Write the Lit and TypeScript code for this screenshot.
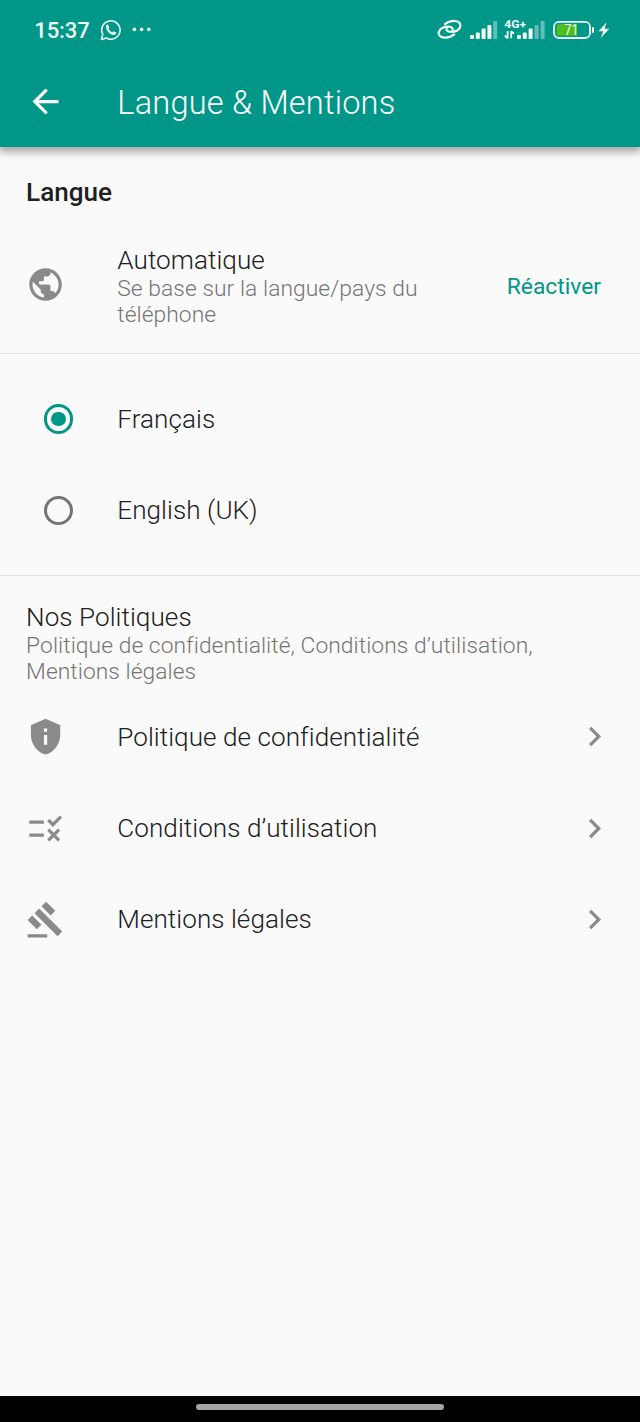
import { LitElement, html, css } from "lit";
import { customElement, property, state } from "lit/decorators.js";
import { classMap } from "lit/directives/class-map.js";

const ICONS: Record<string, string> = {
  back: "M20 11H7.83l5.59-5.59L12 4l-8 8 8 8 1.41-1.41L7.83 13H20v-2z",
  globe:
    "M12 2C6.48 2 2 6.48 2 12s4.48 10 10 10 10-4.48 10-10S17.52 2 12 2zm-1 17.93c-3.95-.49-7-3.85-7-7.93 0-.62.08-1.21.21-1.79L9 15v1c0 1.1.9 2 2 2v1.93zm6.9-2.54c-.26-.81-1-1.39-1.9-1.39h-1v-3c0-.55-.45-1-1-1H8v-2h2c.55 0 1-.45 1-1V7h2c1.1 0 2-.9 2-2v-.41c2.93 1.19 5 4.06 5 7.41 0 2.08-.8 3.97-2.1 5.39z",
  shield:
    "M12 1L3 5v6c0 5.55 3.84 10.74 9 12 5.16-1.26 9-6.45 9-12V5l-9-4zm-1 6h2v2h-2V7zm0 4h2v6h-2v-6z",
  rule:
    "M16.54 11L13 7.46l1.41-1.41 2.12 2.12 4.24-4.24 1.41 1.41L16.54 11zM11 7H2v2h9V7zm10 6.41L19.59 12 17 14.59 14.41 12 13 13.41 15.59 16 13 18.59 14.41 20 17 17.41 19.59 20 21 18.59 18.41 16 21 13.41zM11 15H2v2h9v-2z",
  gavel:
    "M1 21h12v2H1v-2zM5.245 8.07l2.83-2.827 14.14 14.142-2.828 2.828L5.245 8.07zM12.317 1l5.657 5.656-2.83 2.83-5.654-5.66L12.317 1zM3.825 9.485l5.657 5.657-2.828 2.828-5.657-5.657 2.828-2.828z",
  chevron: "M10 6L8.59 7.41 13.17 12l-4.58 4.59L10 18l6-6z",
};

@customElement("md-icon")
class MdIcon extends LitElement {
  @property() name = "";
  static styles = css`
    :host { display: block; width: 39.1px; height: 39.1px; flex: none; }
    svg { display: block; width: 100%; height: 100%; fill: currentColor; }
  `;
  render() {
    return html`<svg viewBox="0 0 24 24"><path d=${ICONS[this.name]} /></svg>`;
  }
}

@customElement("status-bar")
class StatusBar extends LitElement {
  static styles = css`
    :host { display: flex; align-items: center; height: 56px; padding: 0 29px 0 34.3px; color: #f0faf8; }
    .time { font-size: 22px; font-weight: 500; line-height: 26px; margin-top: 5px; width: 65.7px; letter-spacing: -0.1px; }
    svg { display: block; flex: none; margin-top: 3px; }
    .grow { flex: 1; }
    .dots { margin-left: 10px; }
    .net { font: 700 11.5px Roboto, sans-serif; fill: #f0faf8; }
    .pct { font: 400 14px Roboto, sans-serif; fill: #f0faf8; }
  `;
  render() {
    return html`
      <span class="time">15:37</span>
      <svg width="22" height="22" viewBox="0 0 22 22" fill="none" stroke="#f0faf8">
        <path stroke-width="1.6" stroke-linejoin="round" d="M1.4 20.4 2.8 15.4A9.2 9.2 0 1 1 6.3 19Z" />
        <path fill="#f0faf8" stroke="none" d="M6 7.6C6 6.4 7 5.4 7.9 5.6L9.3 8.4 8.5 9.8C9.3 11.5 10.7 12.7 12.3 13.4L13.5 12.2 16.3 13.6C16.4 15 15 16.1 13.7 16.1 9.8 15.7 6.1 11.6 6 7.6Z" />
      </svg>
      <svg class="dots" width="20" height="22" viewBox="0 0 20 22" fill="#f0faf8">
        <circle cx="2.4" cy="10.4" r="1.8" /><circle cx="9.6" cy="10.4" r="1.8" /><circle cx="16.8" cy="10.4" r="1.8" />
      </svg>
      <span class="grow"></span>
      <svg width="174" height="30" viewBox="0 0 174 30" fill="#f0faf8">
        <g fill="none" stroke="#f0faf8" stroke-width="2.2" stroke-linecap="round">
          <path d="M8 9.2C11 6.6 14.5 5.8 18 6 22.5 6.2 24.6 9.6 22.9 12.6 21 15.9 16.5 17 13.5 16.9 10.5 16.8 9.2 15.3 9.6 13.4" />
          <path d="M17.2 19.4C14.2 22 10.7 22.8 7.2 22.6 2.7 22.4.6 19 2.3 16 4.2 12.7 8.7 11.6 11.7 11.7 14.7 11.8 16 13.3 15.6 15.2" />
        </g>
        <g transform="translate(-1 0)">
          <rect x="34" y="20" width="4" height="4" rx="1" /><rect x="39.8" y="17.5" width="4" height="6.5" rx="1" />
          <rect x="45.6" y="13.5" width="4" height="10.5" rx="1" /><rect x="51.4" y="10" width="4" height="14" rx="1" />
          <rect x="57.2" y="6" width="4" height="18" rx="1" opacity=".4" />
          <text class="net" x="68.2" y="13" textLength="21.8" lengthAdjust="spacingAndGlyphs">4G+</text>
          <g fill="none" stroke="#f0faf8" stroke-width="1.8">
            <path d="M71.6 16v7.4M68.8 20.5l2.8 2.8M75.2 23.2V16M78 18.7l-2.8-2.6" />
          </g>
          <rect x="81" y="20" width="4" height="4" rx="1" /><rect x="86.8" y="17.5" width="4" height="6.5" rx="1" />
          <rect x="92.6" y="13.5" width="4" height="10.5" rx="1" />
          <rect x="98.6" y="10" width="4" height="14" rx="1" opacity=".4" /><rect x="104.6" y="6" width="4" height="18" rx="1" opacity=".4" />
          <rect x="118" y="6.8" width="36" height="16.2" rx="5" fill="none" stroke="#f0faf8" stroke-width="1.8" />
          <path fill="#4cbf1d" d="M123 9h18v11.8h-18a2.4 2.4 0 0 1-2.4-2.4v-7a2.4 2.4 0 0 1 2.4-2.4Z" />
          <text class="pct" x="128.6" y="20" textLength="14" lengthAdjust="spacingAndGlyphs">71</text>
          <rect x="156" y="12" width="2" height="6" rx="1" />
          <path d="M170.5 7.2 162.5 16.2H167.2L164.6 23.2 173.4 13.8H168.6Z" />
        </g>
      </svg>
    `;
  }
}

@customElement("list-row")
class ListRow extends LitElement {
  @property() icon = "";
  @property() label = "";
  static styles = css`
    :host { display: flex; align-items: center; height: 91.2px; padding: 0 26.1px; color: #8a8a8a; }
    .label { flex: 1; margin-left: 52.1px; font-size: 26.1px; line-height: 32px; color: #202020; letter-spacing: 0.05px; }
  `;
  render() {
    return html`
      <md-icon name=${this.icon}></md-icon>
      <span class="label">${this.label}</span>
      <md-icon name="chevron"></md-icon>
    `;
  }
}

@customElement("app-root")
class AppRoot extends LitElement {
  @state() private selected = "fr";

  static styles = css`
    :host {
      display: flex; flex-direction: column; height: 1422px; width: 640px; overflow: hidden;
      background: #fafafa; color: #202020; font-family: Roboto, sans-serif; font-weight: 300;
    }
    .header { flex: none; height: 147px; background: #009788; color: #fff; box-shadow: 0 4px 8px 1px rgba(0, 0, 0, 0.34); }
    .toolbar { display: flex; align-items: center; height: 91px; padding-left: 26.1px; }
    .title { margin: 2px 0 0 52.1px; font-size: 32.6px; line-height: 40px; font-weight: 300; letter-spacing: 0.2px; }
    .content { flex: 1; }
    .section { margin: 0; padding: 30px 26.1px 0; font-size: 26.1px; line-height: 31px; font-weight: 500; }
    .auto { box-sizing: border-box; display: flex; padding: 37px 39px 0 26.1px; height: 145px; }
    .auto md-icon { margin-top: 19.5px; color: #8a8a8a; }
    .text { flex: 1; margin-left: 52.1px; }
    .name { font-size: 26.1px; line-height: 31px; letter-spacing: 0.05px; }
    .sub { font-size: 22.8px; line-height: 26px; color: #757575; letter-spacing: 0.06px; }
    .text .sub { width: 330px; }
    .action { font-size: 22.8px; line-height: 28px; font-weight: 400; color: #009788; margin-top: 28px; }
    .rule { height: 1px; background: #e3e3e3; }
    .radios { box-sizing: border-box; padding: 19.5px 0; height: 221px; }
    .option { display: flex; align-items: center; height: 91.3px; padding-left: 43.9px; cursor: pointer; }
    .dot { box-sizing: border-box; width: 29.4px; height: 29.4px; border: 3.3px solid #757575; border-radius: 50%; display: grid; place-items: center; }
    .dot.on { border-color: #009788; }
    .dot.on::after { content: ""; width: 14.7px; height: 14.7px; border-radius: 50%; background: #009788; }
    .option .name { margin-left: 44px; }
    .policies { box-sizing: border-box; padding: 26px 26.1px 0; height: 115.4px; }
    .nav { flex: none; height: 26px; background: #000; display: flex; justify-content: center; }
    .pill { width: 248px; height: 6px; margin-top: 8px; border-radius: 3px; background: #a5a5a5; }
  `;

  private option(id: string, label: string) {
    return html`
      <div class="option" @click=${() => (this.selected = id)}>
        <span class=${classMap({ dot: true, on: this.selected === id })}></span>
        <span class="name">${label}</span>
      </div>
    `;
  }

  render() {
    return html`
      <div class="header">
        <status-bar></status-bar>
        <div class="toolbar">
          <md-icon name="back"></md-icon>
          <div class="title">Langue &amp; Mentions</div>
        </div>
      </div>
      <div class="content">
        <h2 class="section">Langue</h2>
        <div class="auto">
          <md-icon name="globe"></md-icon>
          <div class="text">
            <div class="name">Automatique</div>
            <div class="sub">Se base sur la langue/pays du téléphone</div>
          </div>
          <span class="action">Réactiver</span>
        </div>
        <div class="rule"></div>
        <div class="radios">${this.option("fr", "Français")}${this.option("en", "English (UK)")}</div>
        <div class="rule"></div>
        <div class="policies">
          <div class="name">Nos Politiques</div>
          <div class="sub">Politique de confidentialité, Conditions d’utilisation, Mentions légales</div>
        </div>
        <list-row icon="shield" label="Politique de confidentialité"></list-row>
        <list-row icon="rule" label="Conditions d’utilisation"></list-row>
        <list-row icon="gavel" label="Mentions légales"></list-row>
      </div>
      <div class="nav"><div class="pill"></div></div>
    `;
  }
}
